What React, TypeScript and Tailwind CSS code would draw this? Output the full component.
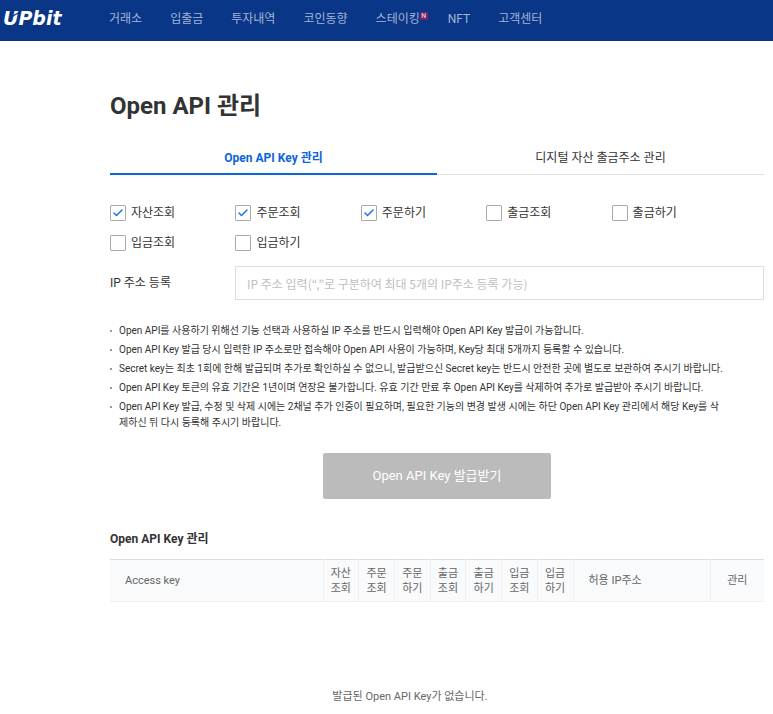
import { useState } from 'react';
import { Check } from 'lucide-react';

const NAV = ['거래소', '입출금', '투자내역', '코인동향', '스테이킹', 'NFT', '고객센터'];

const PERMISSIONS = [
  { id: 'asset', label: '자산조회', on: true },
  { id: 'order-view', label: '주문조회', on: true },
  { id: 'order', label: '주문하기', on: true },
  { id: 'withdraw-view', label: '출금조회', on: false },
  { id: 'withdraw', label: '출금하기', on: false },
  { id: 'deposit-view', label: '입금조회', on: false },
  { id: 'deposit', label: '입금하기', on: false },
];

const NOTES = [
  'Open API를 사용하기 위해선 기능 선택과 사용하실 IP 주소를 반드시 입력해야 Open API Key 발급이 가능합니다.',
  'Open API Key 발급 당시 입력한 IP 주소로만 접속해야 Open API 사용이 가능하며, Key당 최대 5개까지 등록할 수 있습니다.',
  'Secret key는 최초 1회에 한해 발급되며 추가로 확인하실 수 없으니, 발급받으신 Secret key는 반드시 안전한 곳에 별도로 보관하여 주시기 바랍니다.',
  'Open API Key 토큰의 유효 기간은 1년이며 연장은 불가합니다. 유효 기간 만료 후 Open API Key를 삭제하여 추가로 발급받아 주시기 바랍니다.',
  'Open API Key 발급, 수정 및 삭제 시에는 2채널 추가 인증이 필요하며, 필요한 기능의 변경 발생 시에는 하단 Open API Key 관리에서 해당 Key를 삭제하신 뒤 다시 등록해 주시기 바랍니다.',
];

const COLUMNS = [
  ['자산', '조회'],
  ['주문', '조회'],
  ['주문', '하기'],
  ['출금', '조회'],
  ['출금', '하기'],
  ['입금', '조회'],
  ['입금', '하기'],
];

function Header() {
  return (
    <header className="flex h-[41px] items-start bg-[#093687]">
      <div className="w-[109px] shrink-0 pl-[3px] pt-1">
        <a href="#" className="relative inline-block font-['DejaVu_Sans',sans-serif] text-[19px] leading-7 font-bold italic text-white">
          UPbit
          {/* slash that splits the right stem of the U */}
          <svg className="absolute left-2 top-1 h-3 w-3" viewBox="0 0 12 12" fill="none">
            <path d="M1 8.5 8 4.5" stroke="#093687" strokeWidth="1.2" />
          </svg>
        </a>
      </div>
      <nav className="flex gap-7 pt-[9px] text-[12px] leading-5 text-[#a3b4d6]">
        {NAV.map((item) => (
          <a key={item} href="#" className="relative whitespace-nowrap">
            {item}
            {item === '스테이킹' && (
              <span className="absolute left-full top-[3px] flex h-2 w-2 items-center justify-center bg-[#7c1f5c] text-[7px] leading-none font-bold text-[#b9bfe0]">
                N
              </span>
            )}
          </a>
        ))}
      </nav>
    </header>
  );
}

function Permission({ id, label, on }: { id: string; label: string; on: boolean }) {
  const [checked, setChecked] = useState(on);
  return (
    <div className="flex items-center gap-[5px]">
      <span className="relative flex h-4 w-4">
        <input
          id={id}
          type="checkbox"
          checked={checked}
          onChange={() => setChecked(!checked)}
          className="h-4 w-4 appearance-none rounded-[1px] border border-[#aaaaaa] bg-white"
        />
        {checked && (
          <Check size={12} strokeWidth={3} className="pointer-events-none absolute left-0.5 top-0.5 text-[#1772f0]" />
        )}
      </span>
      <label htmlFor={id} className="text-[12px] leading-4">{label}</label>
    </div>
  );
}

export default function App() {
  const [tab, setTab] = useState(0);
  return (
    <div className="min-h-screen bg-white font-[Roboto,'Noto_Sans_CJK_KR',sans-serif] text-[#333333]">
      <Header />
      <main className="pl-[110px] pr-[9px] pt-[49px]">
        <h1 className="text-[24px] leading-8 font-bold">Open API 관리</h1>

        <div className="mt-[18px] flex border-b border-[#e0e0e0]">
          {['Open API Key 관리', '디지털 자산 출금주소 관리'].map((t, i) => (
            <button
              key={t}
              onClick={() => setTab(i)}
              className={`-mb-px h-[35px] flex-1 border-b-2 pt-0.5 text-[12px] leading-5 ${
                tab === i ? 'border-[#0c65e0] font-bold text-[#0c65e0]' : 'border-transparent'
              }`}
            >
              {t}
            </button>
          ))}
        </div>

        <div className="mt-[30px] grid grid-cols-5 gap-y-[14px] pr-[27px]">
          {PERMISSIONS.map((p) => (
            <Permission key={p.id} {...p} />
          ))}
        </div>

        <div className="mt-[15px] flex items-center">
          <label htmlFor="ip" className="w-[125px] shrink-0 text-[12px] leading-4">IP 주소 등록</label>
          <input
            id="ip"
            type="text"
            placeholder="IP 주소 입력(“,”로 구분하여 최대 5개의 IP주소 등록 가능)"
            className="h-[34px] min-w-0 flex-1 border border-[#dddddd] px-[11px] font-['Noto_Sans_CJK_KR',sans-serif] text-[12px] placeholder:text-[#c0c0c0]"
          />
        </div>

        <ul className="mt-[23px] space-y-[3px] pr-[38px] text-[10px] leading-4">
          {NOTES.map((note) => (
            <li key={note} className="flex gap-[7px]">
              <span className="mt-[7px] h-0.5 w-0.5 shrink-0 bg-[#999999]" />
              <span className="break-all">{note}</span>
            </li>
          ))}
        </ul>

        <button className="mx-auto mt-[22px] block h-[46px] w-[228px] rounded-xs bg-[#bbbbbb] text-[13px] text-white">
          Open API Key 발급받기
        </button>

        <h2 className="mt-[30px] text-[12px] leading-5 font-bold">Open API Key 관리</h2>
        <table className="mt-[10px] w-full table-fixed border-collapse text-[11px] leading-[15px] text-[#666666]">
          <thead>
            <tr className="h-[42px] border-t border-b border-t-[#dddddd] border-b-[#f1f1f4] bg-[#f9fafc]">
              <th className="w-[213px] pl-[15px] text-left font-normal">Access key</th>
              {COLUMNS.map(([a, b]) => (
                <th key={a + b} className="border-l border-[#f1f1f4] font-normal">
                  {a}
                  <br />
                  {b}
                </th>
              ))}
              <th className="w-[137px] border-l border-[#f1f1f4] pl-[15px] text-left font-normal">허용 IP주소</th>
              <th className="w-[54px] border-l border-[#f1f1f4] font-normal">관리</th>
            </tr>
          </thead>
          <tbody>
            <tr>
              <td colSpan={9} className="pt-[87px] text-center">발급된 Open API Key가 없습니다.</td>
            </tr>
          </tbody>
        </table>
      </main>
    </div>
  );
}
